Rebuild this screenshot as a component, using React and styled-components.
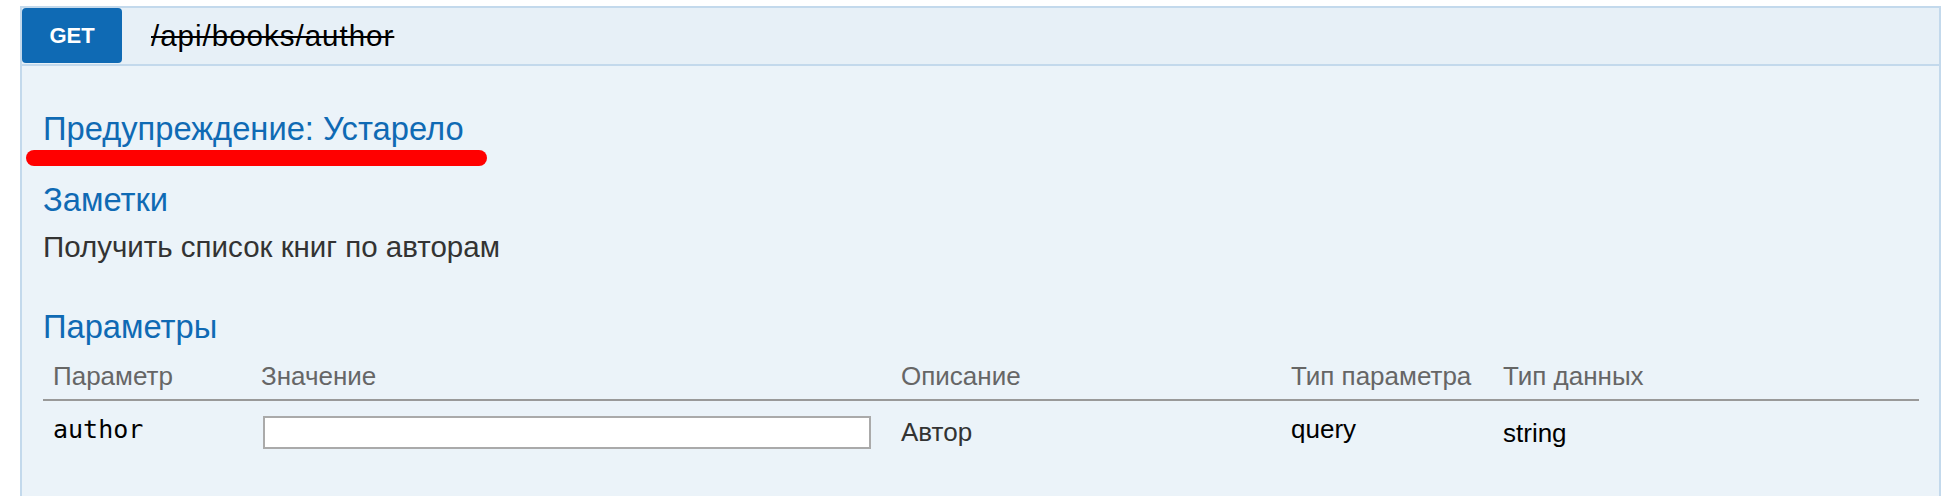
import React from 'react';
import styled, { createGlobalStyle } from 'styled-components';

const GlobalStyle = createGlobalStyle`
  html, body {
    margin: 0;
    padding: 0;
    background: #fff;
  }
  body {
    font-family: "Liberation Sans", Arial, sans-serif;
  }
`;

const Page = styled.div`
  padding: 6px 11px 0 20px;
`;

const Operation = styled.div`
  border: 2px solid #c3d9ec;
  border-bottom: none;
  background: #ebf3f9;
  min-height: 490px;
`;

const Heading = styled.div`
  display: flex;
  align-items: center;
  height: 56px;
  background: #e7f0f7;
  border-bottom: 2px solid #c3d9ec;
`;

const Method = styled.span`
  display: flex;
  align-items: center;
  justify-content: center;
  width: 100px;
  height: 55px;
  align-self: flex-start;
  background: #0f6ab4;
  border-radius: 4px;
  color: #fff;
  font-weight: bold;
  font-size: 22px;
`;

const Path = styled.span`
  margin-left: 29px;
  font-size: 29.5px;
  color: #000;
  text-decoration: line-through;
  letter-spacing: 1px;
`;

const Content = styled.div`
  padding: 45px 21px 0 21px;
`;

const Title = styled.h4`
  margin: ${(p) => p.$top || 0}px 0 0 0;
  font-size: 32.7px;
  line-height: 36px;
  font-weight: normal;
  color: #0f6ab4;
`;

const Mark = styled.div`
  width: 461px;
  height: 16px;
  margin: 3px 0 0 -17px;
  background: #ff0000;
  border-radius: 8px;
`;

const Notes = styled.p`
  margin: 12px 0 0 0;
  font-size: 29.5px;
  line-height: 34px;
  color: #333;
`;

const Table = styled.div`
  margin: 15px 0 0 0;
  width: 1876px;
  display: grid;
  grid-template-columns: 206px 640px 390px 212px 1fr;
`;

const HeadCell = styled.div`
  padding: 0 0 7px ${(p) => p.$left ?? 12}px;
  font-size: 26px;
  line-height: 32px;
  color: #666;
  border-bottom: 2px solid #999;
  white-space: nowrap;
`;

const Cell = styled.div`
  padding: ${(p) => p.$top || 16}px 0 0 ${(p) => p.$left ?? 12}px;
  font-size: 26px;
  line-height: 32px;
  color: ${(p) => p.$color || '#333'};
  font-family: ${(p) => (p.$mono ? '"DejaVu Sans Mono", monospace' : 'inherit')};
  ${(p) => p.$mono && 'font-size: 25px;'}
`;

const ValueInput = styled.input`
  box-sizing: border-box;
  width: 608px;
  height: 33px;
  margin: 0 0 0 2px;
  border: 2px solid #aaa;
  background: #fff;
  outline: none;
`;

const columns = ['Параметр', 'Значение', 'Описание', 'Тип параметра', 'Тип данных'];

const App = () => {
  return (
    <Page>
      <GlobalStyle />
      <Operation>
        <Heading>
          <Method>GET</Method>
          <Path>/api/books/author</Path>
        </Heading>
        <Content>
          <Title>Предупреждение: Устарело</Title>
          <Mark />
          <Title $top={16}>Заметки</Title>
          <Notes>Получить список книг по авторам</Notes>
          <Title $top={45}>Параметры</Title>
          <Table>
            {columns.map((c, i) => (
              <HeadCell key={c} $left={i === 0 ? 10 : 12}>{c}</HeadCell>
            ))}
            <Cell $mono $color="#000" $top={13} $left={10}>author</Cell>
            <Cell $top={11}>
              <ValueInput type="text" />
            </Cell>
            <Cell $top={15}>Автор</Cell>
            <Cell $color="#000" $top={12}>query</Cell>
            <Cell $color="#000" $top={16}>string</Cell>
          </Table>
        </Content>
      </Operation>
    </Page>
  );
};

export default App;
